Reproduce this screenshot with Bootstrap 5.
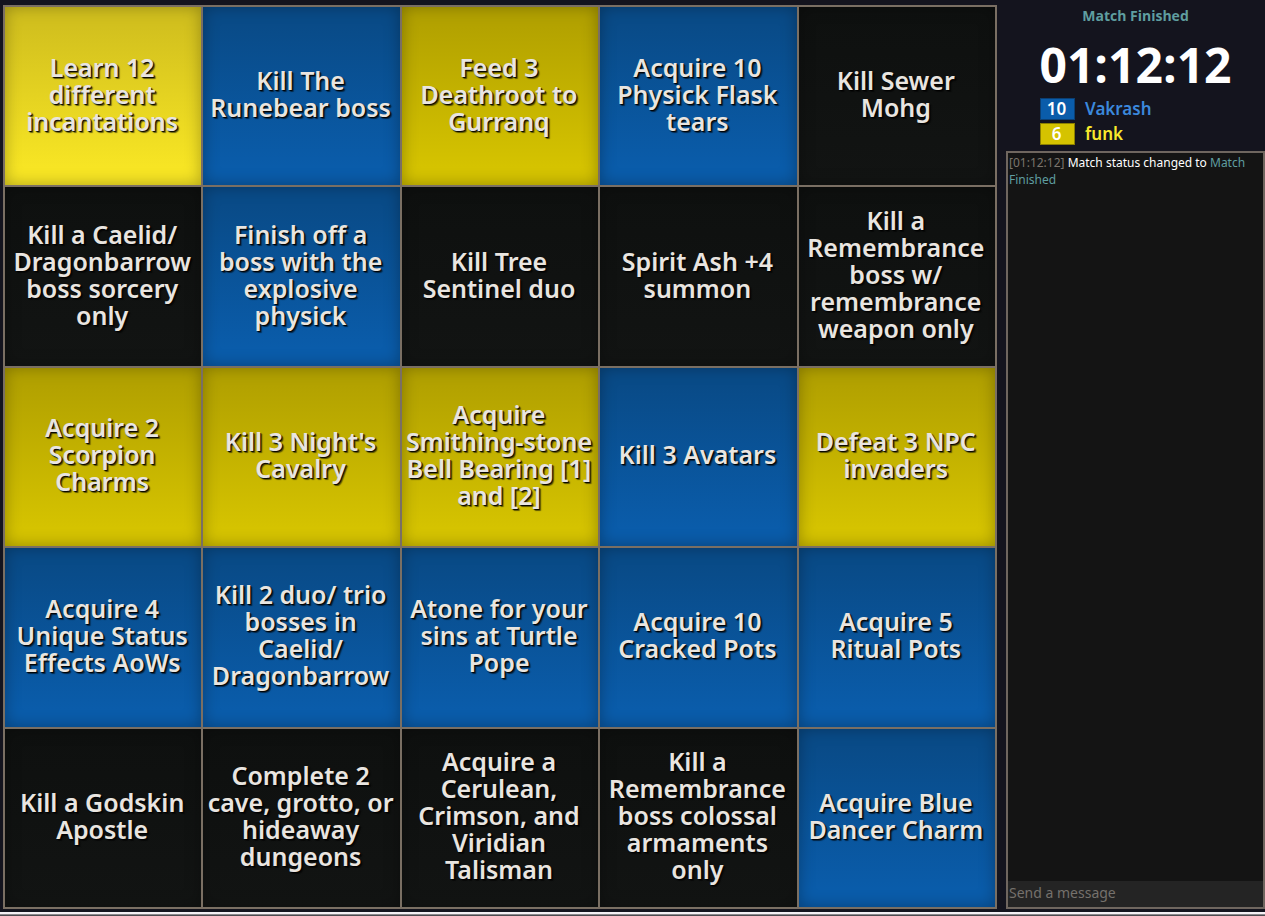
<!DOCTYPE html>
<html lang="en">
<head>
<meta charset="utf-8">
<meta name="viewport" content="width=device-width, initial-scale=1">
<title>Bingo – Match Finished</title>
<link href="https://cdn.jsdelivr.net/npm/bootstrap@5.3.0/dist/css/bootstrap.min.css" rel="stylesheet">
<style>
  body { background: #14141e; font-family: "Open Sans", sans-serif; color: #fff; }
  .page-area { padding: 5px 0 3px 3px; gap: 9px; }
  .board { display: grid; grid-template-columns: repeat(5, minmax(0, 1fr)); grid-auto-rows: minmax(0, 1fr); gap: 2px; padding: 2px; background: #7a6f63; min-width: 0; }
  .square {
    --shade: rgba(0, 0, 0, .3);
    border: 0; padding: 0 6px 4px 4px; color: #e9e5e0;
    font: 600 25px/27px "Noto Sans", sans-serif;
    text-shadow: 1px 1px 1px #000, 2px 2px 1px rgba(0, 0, 0, .5);
    white-space: nowrap; overflow: hidden;
    background: linear-gradient(#0e100f, #121413);
    box-shadow: inset 0 0 16px var(--shade);
  }
  .square.blue { background: linear-gradient(#094b88 10%, #0a5caa 90%); }
  .square.gold { background: linear-gradient(#b3a200 10%, #d5c300 90%); }
  .square.gold.lit { background: linear-gradient(#d2c01e 10%, #f7e524 90%); }
  .side { flex: 0 0 259px; min-width: 0; }
  .match-state { color: #5f9ea0; font-size: 14px; line-height: 22px; font-weight: 700; }
  .timer { font-size: 48px; line-height: 64px; font-weight: 700; margin-top: 6px; }
  .scores { gap: 3px; margin: 1px 34px 6px; }
  .team { gap: 10px; font-size: 17px; line-height: 22px; font-weight: 600; font-family: "Noto Sans", sans-serif; }
  .score { width: 35px; height: 22px; line-height: 20px; padding-right: 2px; color: #fff; text-align: center; }
  .score.blue { background: #0a5caa; border: 1px solid #0b3f73; }
  .score.gold { background: #d5c300; border: 1px solid #8c8000; }
  .name-blue { color: #3b88dc; }
  .name-gold { color: #f9e92c; }
  .chat { border: 2px solid #6f665f; background: #141414; font-family: "Noto Sans", sans-serif; font-size: 12px; line-height: 17px; }
  .log { padding: 1px; }
  .stamp { color: #7b746c; }
  .status { color: #5f9ea0; }
  .message { border: 0; border-radius: 0; background: #242424; color: #ddd; font-size: 14px; line-height: 20px; height: 26px; padding: 0 1px 4px; width: 100%; }
  .message::placeholder { color: #75716c; opacity: 1; }
  .page-edge { height: 4px; border-top: 2px solid #f4f0f4; background: linear-gradient(#8d898d 50%, #4e4c50 50%); }
</style>
</head>
<body class="d-flex flex-column min-vh-100">
<div class="page-area d-flex flex-grow-1">
  <main class="board flex-grow-1">
    <button class="square gold lit">Learn 12<br>different<br>incantations</button>
    <button class="square blue">Kill The<br>Runebear boss</button>
    <button class="square gold">Feed 3<br>Deathroot to<br>Gurranq</button>
    <button class="square blue">Acquire 10<br>Physick Flask<br>tears</button>
    <button class="square">Kill Sewer<br>Mohg</button>

    <button class="square">Kill a Caelid/<br>Dragonbarrow<br>boss sorcery<br>only</button>
    <button class="square blue">Finish off a<br>boss with the<br>explosive<br>physick</button>
    <button class="square">Kill Tree<br>Sentinel duo</button>
    <button class="square">Spirit Ash +4<br>summon</button>
    <button class="square">Kill a<br>Remembrance<br>boss w/<br>remembrance<br>weapon only</button>

    <button class="square gold">Acquire 2<br>Scorpion<br>Charms</button>
    <button class="square gold">Kill 3 Night's<br>Cavalry</button>
    <button class="square gold">Acquire<br>Smithing-stone<br>Bell Bearing [1]<br>and [2]</button>
    <button class="square blue">Kill 3 Avatars</button>
    <button class="square gold">Defeat 3 NPC<br>invaders</button>

    <button class="square blue">Acquire 4<br>Unique Status<br>Effects AoWs</button>
    <button class="square blue">Kill 2 duo/ trio<br>bosses in<br>Caelid/<br>Dragonbarrow</button>
    <button class="square blue">Atone for your<br>sins at Turtle<br>Pope</button>
    <button class="square blue">Acquire 10<br>Cracked Pots</button>
    <button class="square blue">Acquire 5<br>Ritual Pots</button>

    <button class="square">Kill a Godskin<br>Apostle</button>
    <button class="square">Complete 2<br>cave, grotto, or<br>hideaway<br>dungeons</button>
    <button class="square">Acquire a<br>Cerulean,<br>Crimson, and<br>Viridian<br>Talisman</button>
    <button class="square">Kill a<br>Remembrance<br>boss colossal<br>armaments<br>only</button>
    <button class="square blue">Acquire Blue<br>Dancer Charm</button>
  </main>

  <aside class="side d-flex flex-column">
    <div class="match-state text-center">Match Finished</div>
    <div class="timer text-center">01:12:12</div>
    <div class="scores d-flex flex-column">
      <div class="team d-flex align-items-center"><span class="score blue">10</span><span class="name-blue">Vakrash</span></div>
      <div class="team d-flex align-items-center"><span class="score gold">6</span><span class="name-gold">funk</span></div>
    </div>
    <section class="chat d-flex flex-column flex-grow-1">
      <div class="log flex-grow-1"><span class="stamp">[01:12:12]</span> Match status changed to <span class="status">Match Finished</span></div>
      <input class="message" type="text" placeholder="Send a message" aria-label="Send a message">
    </section>
  </aside>
</div>
<footer class="page-edge"></footer>
<script src="https://cdn.jsdelivr.net/npm/bootstrap@5.3.0/dist/js/bootstrap.bundle.min.js"></script>
</body>
</html>
